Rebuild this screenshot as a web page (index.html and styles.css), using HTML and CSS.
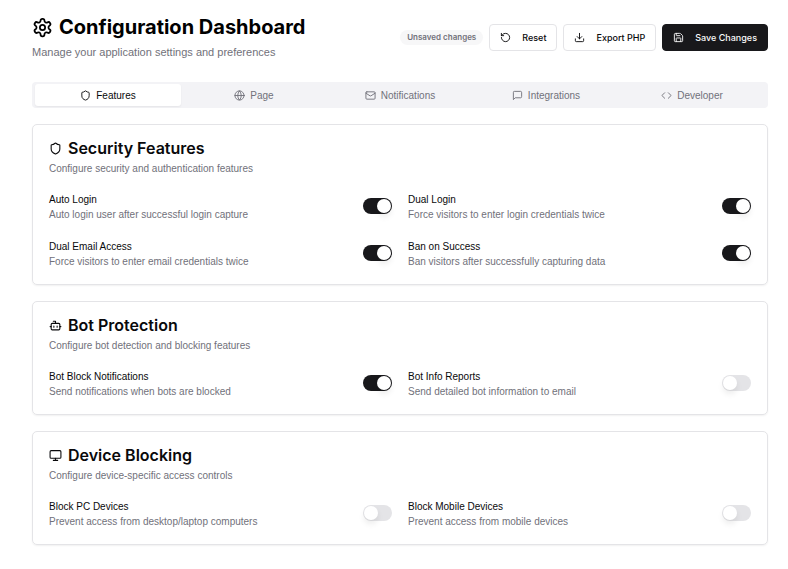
FILE: index.html
```html
<!DOCTYPE html>
<html lang="en">
<head>
<meta charset="utf-8">
<meta name="viewport" content="width=device-width, initial-scale=1">
<title>Configuration Dashboard</title>
<link rel="stylesheet" href="styles.css">
</head>
<body>
<main class="page">
  <header class="header">
    <div class="heading">
      <h1 class="page-title">
        <svg class="icon icon-lg" viewBox="0 0 24 24" aria-hidden="true"><path d="M12.22 2h-.44a2 2 0 0 0-2 2v.18a2 2 0 0 1-1 1.73l-.43.25a2 2 0 0 1-2 0l-.15-.08a2 2 0 0 0-2.73.73l-.22.38a2 2 0 0 0 .73 2.73l.15.1a2 2 0 0 1 1 1.72v.51a2 2 0 0 1-1 1.74l-.15.09a2 2 0 0 0-.73 2.73l.22.38a2 2 0 0 0 2.73.73l.15-.08a2 2 0 0 1 2 0l.43.25a2 2 0 0 1 1 1.73V20a2 2 0 0 0 2 2h.44a2 2 0 0 0 2-2v-.18a2 2 0 0 1 1-1.73l.43-.25a2 2 0 0 1 2 0l.15.08a2 2 0 0 0 2.73-.73l.22-.39a2 2 0 0 0-.73-2.73l-.15-.08a2 2 0 0 1-1-1.74v-.5a2 2 0 0 1 1-1.74l.15-.09a2 2 0 0 0 .73-2.73l-.22-.38a2 2 0 0 0-2.73-.73l-.15.08a2 2 0 0 1-2 0l-.43-.25a2 2 0 0 1-1-1.73V4a2 2 0 0 0-2-2z"/><circle cx="12" cy="12" r="3"/></svg>
        Configuration Dashboard
      </h1>
      <p class="subtitle">Manage your application settings and preferences</p>
    </div>
    <div class="actions">
      <span class="badge">Unsaved changes</span>
      <button class="button" type="button">
        <svg class="icon" viewBox="0 0 24 24" aria-hidden="true"><path d="M3 12a9 9 0 1 0 9-9 9.75 9.75 0 0 0-6.74 2.74L3 8"/><path d="M3 3v5h5"/></svg>
        Reset
      </button>
      <button class="button" type="button">
        <svg class="icon" viewBox="0 0 24 24" aria-hidden="true"><path d="M21 15v4a2 2 0 0 1-2 2H5a2 2 0 0 1-2-2v-4"/><path d="m7 10 5 5 5-5"/><path d="M12 15V3"/></svg>
        Export PHP
      </button>
      <button class="button button-primary" type="button">
        <svg class="icon" viewBox="0 0 24 24" aria-hidden="true"><path d="M15.2 3a2 2 0 0 1 1.4.6l3.8 3.8a2 2 0 0 1 .6 1.4V19a2 2 0 0 1-2 2H5a2 2 0 0 1-2-2V5a2 2 0 0 1 2-2z"/><path d="M17 21v-7a1 1 0 0 0-1-1H8a1 1 0 0 0-1 1v7"/><path d="M7 3v4a1 1 0 0 0 1 1h7"/></svg>
        Save Changes
      </button>
    </div>
  </header>

  <div class="tabs" role="tablist">
    <button class="tab tab-active" type="button" role="tab" aria-selected="true">
      <svg class="icon" viewBox="0 0 24 24" aria-hidden="true"><path d="M20 13c0 5-3.500 7.500-7.660 8.950a1 1 0 0 1-.67-.01C7.500 20.500 4 18 4 13V6a1 1 0 0 1 1-1c2 0 4.500-1.200 6.240-2.720a1.170 1.170 0 0 1 1.520 0C14.510 3.810 17 5 19 5a1 1 0 0 1 1 1z"/></svg>
      Features
    </button>
    <button class="tab" type="button" role="tab" aria-selected="false">
      <svg class="icon" viewBox="0 0 24 24" aria-hidden="true"><circle cx="12" cy="12" r="10"/><path d="M12 2a14.500 14.500 0 0 0 0 20 14.500 14.500 0 0 0 0-20"/><path d="M2 12h20"/></svg>
      Page
    </button>
    <button class="tab" type="button" role="tab" aria-selected="false">
      <svg class="icon" viewBox="0 0 24 24" aria-hidden="true"><rect width="20" height="16" x="2" y="4" rx="2"/><path d="m22 7-8.970 5.700a1.940 1.940 0 0 1-2.060 0L2 7"/></svg>
      Notifications
    </button>
    <button class="tab" type="button" role="tab" aria-selected="false">
      <svg class="icon" viewBox="0 0 24 24" aria-hidden="true"><path d="M21 15a2 2 0 0 1-2 2H7l-4 4V5a2 2 0 0 1 2-2h14a2 2 0 0 1 2 2z"/></svg>
      Integrations
    </button>
    <button class="tab" type="button" role="tab" aria-selected="false">
      <svg class="icon" viewBox="0 0 24 24" aria-hidden="true"><path d="m16 18 6-6-6-6"/><path d="m8 6-6 6 6 6"/></svg>
      Developer
    </button>
  </div>

  <section class="card">
    <h2 class="card-title">
      <svg class="icon icon-md" viewBox="0 0 24 24" aria-hidden="true"><path d="M20 13c0 5-3.500 7.500-7.660 8.950a1 1 0 0 1-.67-.01C7.500 20.500 4 18 4 13V6a1 1 0 0 1 1-1c2 0 4.500-1.200 6.240-2.720a1.170 1.170 0 0 1 1.520 0C14.510 3.810 17 5 19 5a1 1 0 0 1 1 1z"/></svg>
      Security Features
    </h2>
    <p class="card-text">Configure security and authentication features</p>
    <div class="settings">
      <div class="setting">
        <div class="setting-copy">
          <label class="setting-name" for="auto-login">Auto Login</label>
          <p class="setting-text">Auto login user after successful login capture</p>
        </div>
        <input class="switch" type="checkbox" role="switch" id="auto-login" checked>
      </div>
      <div class="setting">
        <div class="setting-copy">
          <label class="setting-name" for="dual-login">Dual Login</label>
          <p class="setting-text">Force visitors to enter login credentials twice</p>
        </div>
        <input class="switch" type="checkbox" role="switch" id="dual-login" checked>
      </div>
      <div class="setting">
        <div class="setting-copy">
          <label class="setting-name" for="dual-email">Dual Email Access</label>
          <p class="setting-text">Force visitors to enter email credentials twice</p>
        </div>
        <input class="switch" type="checkbox" role="switch" id="dual-email" checked>
      </div>
      <div class="setting">
        <div class="setting-copy">
          <label class="setting-name" for="ban-success">Ban on Success</label>
          <p class="setting-text">Ban visitors after successfully capturing data</p>
        </div>
        <input class="switch" type="checkbox" role="switch" id="ban-success" checked>
      </div>
    </div>
  </section>

  <section class="card">
    <h2 class="card-title">
      <svg class="icon icon-md" viewBox="0 0 24 24" aria-hidden="true"><path d="M12 8V4H8"/><rect width="16" height="12" x="4" y="8" rx="2"/><path d="M2 14h2"/><path d="M20 14h2"/><path d="M15 13v2"/><path d="M9 13v2"/></svg>
      Bot Protection
    </h2>
    <p class="card-text">Configure bot detection and blocking features</p>
    <div class="settings">
      <div class="setting">
        <div class="setting-copy">
          <label class="setting-name" for="bot-block">Bot Block Notifications</label>
          <p class="setting-text">Send notifications when bots are blocked</p>
        </div>
        <input class="switch" type="checkbox" role="switch" id="bot-block" checked>
      </div>
      <div class="setting">
        <div class="setting-copy">
          <label class="setting-name" for="bot-info">Bot Info Reports</label>
          <p class="setting-text">Send detailed bot information to email</p>
        </div>
        <input class="switch" type="checkbox" role="switch" id="bot-info">
      </div>
    </div>
  </section>

  <section class="card">
    <h2 class="card-title">
      <svg class="icon icon-md" viewBox="0 0 24 24" aria-hidden="true"><rect width="20" height="14" x="2" y="3" rx="2"/><path d="M8 21h8"/><path d="M12 17v4"/></svg>
      Device Blocking
    </h2>
    <p class="card-text">Configure device-specific access controls</p>
    <div class="settings">
      <div class="setting">
        <div class="setting-copy">
          <label class="setting-name" for="block-pc">Block PC Devices</label>
          <p class="setting-text">Prevent access from desktop/laptop computers</p>
        </div>
        <input class="switch" type="checkbox" role="switch" id="block-pc">
      </div>
      <div class="setting">
        <div class="setting-copy">
          <label class="setting-name" for="block-mobile">Block Mobile Devices</label>
          <p class="setting-text">Prevent access from mobile devices</p>
        </div>
        <input class="switch" type="checkbox" role="switch" id="block-mobile">
      </div>
    </div>
  </section>
</main>
</body>
</html>
```
FILE: styles.css
```css
:root {
  --ink: #09090b;
  --dark: #18181b;
  --muted: #71717a;
  --line: #e4e4e7;
  --soft: #f7f7f8;
  --tabs: #f3f3f6;
  --display: Inter, "Liberation Sans", sans-serif;
}

* {
  box-sizing: border-box;
}

body {
  margin: 0;
  background: #fff;
  color: var(--ink);
  font-family: "Liberation Sans", Arial, sans-serif;
  font-size: 10px;
  line-height: 15px;
}

h1,
h2,
p {
  margin: 0;
}

button {
  font: inherit;
  cursor: pointer;
}

.page {
  display: flex;
  flex-direction: column;
  gap: 16px;
  padding: 14px 20px 24px 32px;
}

.header {
  display: flex;
  align-items: center;
  justify-content: space-between;
  margin-bottom: 6px;
}

.page-title {
  display: flex;
  align-items: center;
  gap: 6px;
  color: #000;
  font-family: var(--display);
  font-size: 20px;
  line-height: 26px;
  font-weight: 700;
}

.subtitle {
  margin-top: 4px;
  color: var(--muted);
  font-size: 11px;
  line-height: 16px;
}

.icon {
  flex: none;
  width: 11px;
  height: 11px;
  fill: none;
  stroke: currentColor;
  stroke-width: 2;
  stroke-linecap: round;
  stroke-linejoin: round;
}

.icon-md {
  width: 13px;
  height: 13px;
}

.icon-lg {
  width: 21px;
  height: 21px;
}

.actions {
  display: flex;
  align-items: center;
  gap: 6px;
}

.badge {
  padding: 0 7px;
  border-radius: 8px;
  background: var(--soft);
  color: var(--muted);
  font-family: var(--display);
  font-size: 8px;
  font-weight: 600;
}

.button {
  display: flex;
  align-items: center;
  gap: 11px;
  height: 27px;
  padding: 0 10px;
  border: 1px solid var(--line);
  border-radius: 4px;
  background: #fff;
  color: var(--ink);
  font-family: var(--display);
  font-size: 9px;
  font-weight: 500;
}

.button-primary {
  border-color: var(--dark);
  background: var(--dark);
  color: #fafafa;
}

.tabs {
  display: grid;
  grid-template-columns: repeat(5, 1fr);
  padding: 2px 3px;
  border-radius: 4px;
  background: var(--tabs);
}

.tab {
  display: flex;
  align-items: center;
  justify-content: center;
  gap: 5px;
  height: 22px;
  padding: 0 8px;
  border: 0;
  border-radius: 3px;
  background: transparent;
  color: var(--muted);
}

.tab-active {
  background: #fff;
  color: var(--ink);
  box-shadow: 0 1px 2px rgb(0 0 0 / 6%);
}

.card {
  padding: 16px 16px 15px;
  border: 1px solid var(--line);
  border-radius: 5px;
  box-shadow: 0 1px 2px rgb(0 0 0 / 6%);
}

.card-title {
  display: flex;
  align-items: center;
  gap: 6px;
  font-family: var(--display);
  font-size: 16px;
  line-height: 15px;
  font-weight: 600;
}

.card-text {
  margin-top: 5px;
  color: var(--muted);
}

.settings {
  display: grid;
  grid-template-columns: repeat(2, 1fr);
  gap: 17px 16px;
  margin-top: 16px;
}

.setting {
  display: flex;
  align-items: flex-start;
  justify-content: space-between;
}

.setting-name {
  display: block;
}

.setting-text {
  color: var(--muted);
}

.switch {
  flex: none;
  width: 29px;
  height: 16px;
  margin: 6px 0 0;
  padding: 1px;
  border-radius: 8px;
  background: var(--line);
  appearance: none;
  cursor: pointer;
}

.switch::before {
  content: "";
  display: block;
  width: 14px;
  height: 14px;
  border-radius: 50%;
  background: #fff;
  box-shadow: 0 4px 6px rgb(0 0 0 / 8%);
}

.switch:checked {
  background: var(--dark);
}

.switch:checked::before {
  margin-left: auto;
}
```
